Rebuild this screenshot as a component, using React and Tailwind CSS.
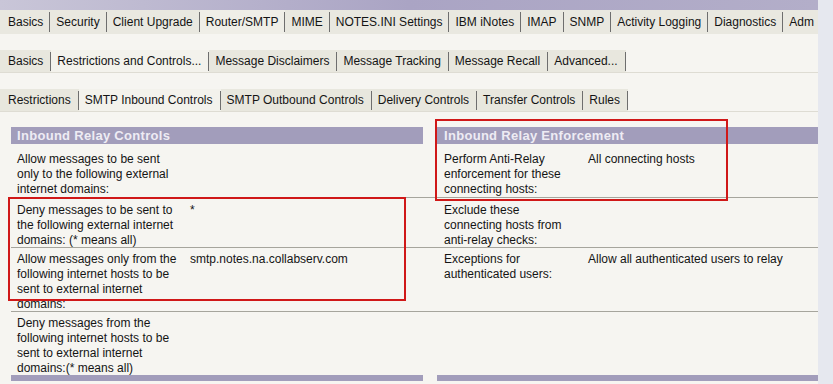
import React from 'react';

const ROW1 = [
  "Basics", "Security", "Client Upgrade", "Router/SMTP", "MIME", "NOTES.INI Settings",
  "IBM iNotes", "IMAP", "SNMP", "Activity Logging", "Diagnostics", "Adm",
];
const ROW2 = [
  "Basics", "Restrictions and Controls...", "Message Disclaimers",
  "Message Tracking", "Message Recall", "Advanced...",
];
const ROW3 = [
  "Restrictions", "SMTP Inbound Controls", "SMTP Outbound Controls",
  "Delivery Controls", "Transfer Controls", "Rules",
];

function Tab({ label, first, selected, plain }) {
  const bg = selected ? "bg-[#f3f2ec]" : plain ? "" : "bg-[#e8e7de]";
  return (
    <div className={`flex items-center h-full shrink-0 ${bg}`}>
      <span className={`${first ? "pl-[8px]" : "pl-[6px]"} pr-[7px] whitespace-nowrap`}>{label}</span>
      <div className="w-px h-[19px] bg-[#6e6e6e]" />
    </div>
  );
}

function TabRow({ tabs, selected }) {
  return (
    <div className="flex items-center h-[23px] overflow-hidden border-b border-[#dedcd3]">
      {tabs.map((t, i) => (
        <Tab key={t + i} label={t} first={i === 0} selected={i === selected} />
      ))}
    </div>
  );
}

const ROWS = [
  {
    h: "h-[54px] pt-[8px]",
    l1: ["Allow messages to be sent", "only to the following external", "internet domains:"],
    v1: "",
    l2: ["Perform Anti-Relay", "enforcement for these", "connecting hosts:"],
    v2: "All connecting hosts",
  },
  {
    h: "h-[50px] pt-[5px]",
    l1: ["Deny messages to be sent to", "the following external internet", "domains: (* means all)"],
    v1: "*",
    l2: ["Exclude these", "connecting hosts from", "anti-relay checks:"],
    v2: "",
  },
  {
    h: "h-[64px] pt-[4px]",
    l1: ["Allow messages only from the", "following internet hosts to be", "sent to external internet", "domains:"],
    v1: "smtp.notes.na.collabserv.com",
    l2: ["Exceptions for", "authenticated users:"],
    v2: "Allow all authenticated users to relay",
  },
  {
    h: "h-[63px] pt-[4px]",
    l1: ["Deny messages from the", "following internet hosts to be", "sent to external internet", "domains:(* means all)"],
    v1: "",
    l2: [],
    v2: "",
    last: true,
  },
];

function Lines({ lines }) {
  return lines.map((l, i) => <div key={i} className="whitespace-nowrap">{l}</div>);
}

export default function App() {
  return (
    <div
      className="relative w-[833px] h-[384px] flex bg-[#e6e8ef] overflow-hidden text-[12px] leading-[15px] text-[#141414]"
      style={{ fontFamily: "'Liberation Sans', Arial, sans-serif" }}
    >
      <div className="w-[818px] shrink-0 flex flex-col bg-[#f6f5f1]">
        {/* banner */}
        <div className="h-[10px] bg-gradient-to-r from-[#c9c6d8] via-[#aaa4c4] to-[#b3aec9]" />

        <div className="h-[24px] flex items-center bg-[#e9e8e0] overflow-hidden">
          {ROW1.map((t, i) => (
            <div key={t} className={`flex items-center h-full shrink-0 ${i === 3 ? "bg-[#efeee7]" : ""}`}>
              <span className={`${i === 0 ? "pl-[8px]" : "pl-[6px]"} pr-[6px] whitespace-nowrap`}>{t}</span>
              {i < ROW1.length - 1 && <div className="w-px h-[20px] bg-[#6e6e6e]" />}
            </div>
          ))}
        </div>

        <div className="h-[16px]" />
        <TabRow tabs={ROW2} selected={1} />
        <div className="h-[16px]" />
        <TabRow tabs={ROW3} selected={1} />
        <div className="h-[15px]" />

        {/* table */}
        <div className="ml-[11px] grid grid-cols-[172px_240px_14px_144px_237px]">
          <div className="col-span-2 h-[17px] bg-[#a29dbb] text-[#eeecf4] text-[13px] tracking-[0.3px] font-bold leading-[17px] pl-[6px]">
            Inbound Relay Controls
          </div>
          <div />
          <div className="col-span-2 h-[17px] bg-[#a29dbb] text-[#eeecf4] text-[13px] tracking-[0.3px] font-bold leading-[17px] pl-[7px]">
            Inbound Relay Enforcement
          </div>

          {ROWS.map((r, i) => {
            const cell = `${r.h} ${r.last ? "" : "border-b border-[#a6a59d]"}`;
            return (
              <React.Fragment key={i}>
                <div className={`${cell} pl-[6px]`}><Lines lines={r.l1} /></div>
                <div className={`${cell} pl-[7px]`}>{r.v1}</div>
                <div className={cell} />
                <div className={`${cell} pl-[7px]`}><Lines lines={r.l2} /></div>
                <div className={`${cell} pl-[7px]`}>{r.v2}</div>
              </React.Fragment>
            );
          })}

          <div className="col-span-2 h-[6px] bg-[#a29dbb]" />
          <div />
          <div className="col-span-2 h-[6px] bg-[#a29dbb]" />
        </div>
      </div>
      <div className="flex-1" />

      {/* annotation boxes */}
      <div className="absolute left-[8px] top-[197px] w-[398px] h-[104px] border-2 border-[#d01818]" />
      <div className="absolute left-[435px] top-[119px] w-[293px] h-[82px] border-2 border-[#d01818]" />
    </div>
  );
}
